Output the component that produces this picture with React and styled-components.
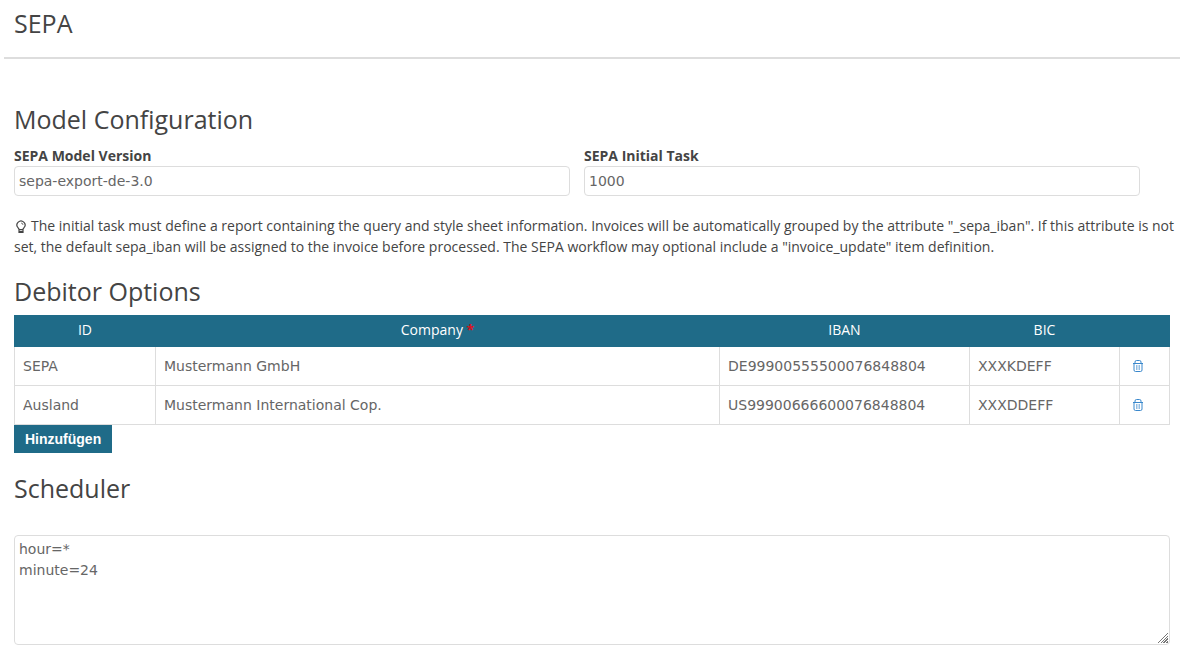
import React, { useState } from "react";
import styled, { createGlobalStyle, css } from "styled-components";

const Global = createGlobalStyle`
  *, *::before, *::after { box-sizing: border-box; }
  body {
    margin: 0;
    background: #fff;
    color: #444;
    font: 14px/21px "Open Sans", sans-serif;
  }
`;

const Page = styled.main`
  padding: 0 9px 10px 4px;
`;

const Header = styled.header`
  height: 59px;
  padding: 5px 10px 0;
  border-bottom: 2px solid #ddd;
`;

const heading = css`
  margin: 0;
  font-size: 25px;
  font-weight: 400;
  line-height: 36px;
  color: #444;
`;

const Title = styled.h1`${heading}`;
const SectionTitle = styled.h2`${heading}`;

const Section = styled.section`
  padding: 0 10px;
  margin-top: ${(p) => p.$gap}px;
`;

const Fields = styled.div`
  display: grid;
  grid-template-columns: 1fr 1fr;
  column-gap: 14px;
  padding: 9px 30px 0 0;
`;

const Field = styled.div`
  display: flex;
  flex-direction: column;
`;

const Label = styled.label`
  font-weight: 700;
  line-height: 20px;
`;

const control = css`
  width: 100%;
  border: 1px solid #ddd;
  border-radius: 4px;
  background: #fff;
  color: #666;
  font: 14px/21px "DejaVu Sans", sans-serif;
`;

const TextInput = styled.input`
  ${control}
  height: 30px;
  padding: 3px 4px;
`;

const Note = styled.p`
  margin: 19px -10px 0 0;
`;

const BulbIcon = styled.svg`
  width: 14px;
  height: 14px;
  margin-right: 3px;
  vertical-align: -3px;
`;

const Table = styled.table`
  width: 100%;
  margin-top: 6px;
  border-collapse: collapse;
  table-layout: fixed;
`;

const Col = styled.col`
  width: ${(p) => (p.$width ? `${p.$width}px` : "auto")};
`;

const Th = styled.th`
  height: 31px;
  padding: 0 0 4px;
  border: 1px solid #1f6b88;
  background: #1f6b88;
  color: #fff;
  font-weight: 400;
`;

const Required = styled.span`
  color: #d8101c;
  font-weight: 700;
`;

const Td = styled.td`
  height: 39px;
  padding: 0 4px;
  border: 1px solid #ddd;
`;

const CellInput = styled.input`
  width: 100%;
  height: 28px;
  padding: 0 4px;
  border: 0;
  background: transparent;
  color: #666;
  font: 14px/21px "DejaVu Sans", sans-serif;
`;

const IconButton = styled.button`
  display: flex;
  margin-left: 8px;
  padding: 0;
  border: 0;
  background: none;
  color: #3a88cc;
  cursor: pointer;
`;

const AddButton = styled.button`
  display: block;
  height: 28px;
  padding: 0 11px;
  border: 0;
  background: #1f6b88;
  color: #fff;
  font: 700 14px/28px "Liberation Sans", sans-serif;
  cursor: pointer;
`;

const TextArea = styled.textarea`
  ${control}
  display: block;
  height: 110px;
  margin-top: 29px;
  padding: 3px 4px;
  resize: both;

  &::-webkit-resizer {
    background:
      linear-gradient(135deg, #fff 50%, transparent 50%) right 1px bottom 1px / 11px 11px no-repeat,
      repeating-linear-gradient(135deg, #777 0 1px, #fff 1px 2px) right 1px bottom 1px / 11px 11px no-repeat;
  }
`;

const initialRows = [
  { key: 1, id: "SEPA", company: "Mustermann GmbH", iban: "DE99900555500076848804", bic: "XXXKDEFF" },
  { key: 2, id: "Ausland", company: "Mustermann International Cop.", iban: "US99900666600076848804", bic: "XXXDDEFF" },
];

const columns = ["id", "company", "iban", "bic"];

function TrashIcon() {
  return (
    <svg width="12" height="14" viewBox="0 0 12 14" fill="none" stroke="currentColor" aria-hidden="true">
      <path d="M1 4.500h10M3 4.500V3Q3 1.500 4.500 1.500h3Q9 1.500 9 3v1.500" />
      <path d="M2 4.500V11q0 1.500 1.500 1.500h5q1.500 0 1.500-1.500V4.500" />
      <path d="M4.500 6v5M6 6v5M7.500 6v5" strokeOpacity="0.55" />
    </svg>
  );
}

export default function App() {
  const [rows, setRows] = useState(initialRows);
  const add = () => setRows([...rows, { key: Date.now(), id: "", company: "", iban: "", bic: "" }]);
  const remove = (key) => setRows(rows.filter((r) => r.key !== key));

  return (
    <>
      <Global />
      <Page>
        <Header>
          <Title>SEPA</Title>
        </Header>

        <Section $gap={42}>
          <SectionTitle>Model Configuration</SectionTitle>
          <Fields>
            <Field>
              <Label htmlFor="version">SEPA Model Version</Label>
              <TextInput id="version" defaultValue="sepa-export-de-3.0" />
            </Field>
            <Field>
              <Label htmlFor="task">SEPA Initial Task</Label>
              <TextInput id="task" defaultValue="1000" />
            </Field>
          </Fields>
          <Note>
            <BulbIcon viewBox="0 0 14 14" fill="none" stroke="currentColor" strokeWidth="1.2" aria-hidden="true">
              <path d="M5 9.500Q5 8.500 4 7.700A4 4 0 1 1 10 7.700Q9 8.500 9 9.500Z" />
              <path d="M5 10v2.500h4V10M5 11.300h4" />
              <path d="M7 3a2 2 0 0 1 2 2" strokeWidth="0.700" />
            </BulbIcon>
            The initial task must define a report containing the query and style sheet information. Invoices will be
            automatically grouped by the attribute "_sepa_iban". If this attribute is not set, the default sepa_iban
            will be assigned to the invoice before processed. The SEPA workflow may optional include a
            "invoice_update" item definition.
          </Note>
        </Section>

        <Section $gap={16}>
          <SectionTitle>Debitor Options</SectionTitle>
          <Table>
            <colgroup>
              <Col $width={141} />
              <Col />
              <Col $width={250} />
              <Col $width={150} />
              <Col $width={50} />
            </colgroup>
            <thead>
              <tr>
                <Th>ID</Th>
                <Th>Company <Required>*</Required></Th>
                <Th>IBAN</Th>
                <Th>BIC</Th>
                <Th />
              </tr>
            </thead>
            <tbody>
              {rows.map((row) => (
                <tr key={row.key}>
                  {columns.map((name) => (
                    <Td key={name}>
                      <CellInput aria-label={name} defaultValue={row[name]} />
                    </Td>
                  ))}
                  <Td>
                    <IconButton type="button" aria-label="Delete" onClick={() => remove(row.key)}>
                      <TrashIcon />
                    </IconButton>
                  </Td>
                </tr>
              ))}
            </tbody>
          </Table>
          <AddButton type="button" onClick={add}>Hinzufügen</AddButton>
        </Section>

        <Section $gap={17}>
          <SectionTitle id="scheduler">Scheduler</SectionTitle>
          <TextArea aria-labelledby="scheduler" defaultValue={"hour=*\nminute=24"} />
        </Section>
      </Page>
    </>
  );
}
